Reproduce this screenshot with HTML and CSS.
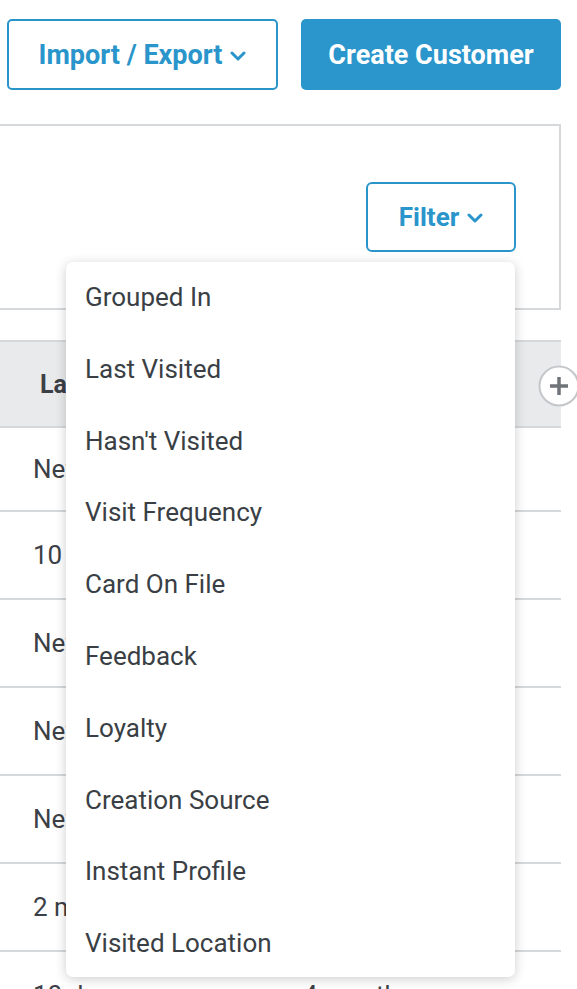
FILE: index.html
```html
<!DOCTYPE html>
<html lang="en">
<head>
<meta charset="utf-8">
<title>Customers</title>
<link rel="stylesheet" href="styles.css">
</head>
<body>
<div class="page">
  <div class="toolbar">
    <button class="btn btn-outline btn-import">Import / Export
      <svg class="chev" width="16" height="10" viewBox="0 0 16 10"><path d="M2 2 L8 8 L14 2" fill="none" stroke="currentColor" stroke-width="3" stroke-linecap="round" stroke-linejoin="round"/></svg>
    </button>
    <button class="btn btn-primary btn-create">Create Customer</button>
  </div>

  <div class="panel">
    <button class="btn btn-outline btn-filter">Filter
      <svg class="chev" width="16" height="10" viewBox="0 0 16 10"><path d="M2 2 L8 8 L14 2" fill="none" stroke="currentColor" stroke-width="3" stroke-linecap="round" stroke-linejoin="round"/></svg>
    </button>
    <ul class="menu">
      <li class="menu-item">Grouped In</li>
      <li class="menu-item">Last Visited</li>
      <li class="menu-item">Hasn't Visited</li>
      <li class="menu-item">Visit Frequency</li>
      <li class="menu-item">Card On File</li>
      <li class="menu-item">Feedback</li>
      <li class="menu-item">Loyalty</li>
      <li class="menu-item">Creation Source</li>
      <li class="menu-item">Instant Profile</li>
      <li class="menu-item">Visited Location</li>
    </ul>
  </div>

  <div class="table">
    <div class="thead">
      <span class="th">Last Visit</span>
      <span class="add-col">
        <svg width="42" height="42" viewBox="0 0 42 42"><circle cx="21" cy="21" r="19.5" fill="#fff" stroke="#c4c7ca" stroke-width="2"/><path d="M21 12 V30 M12 21 H30" stroke="#6f7479" stroke-width="3.5"/></svg>
      </span>
    </div>
    <div class="row row-first"><span class="c1">Never</span><span class="c2">Never</span></div>
    <div class="row"><span class="c1">10 days ago</span><span class="c2">3 months</span></div>
    <div class="row"><span class="c1">Never</span><span class="c2">Never</span></div>
    <div class="row"><span class="c1">Never</span><span class="c2">Never</span></div>
    <div class="row"><span class="c1">Never</span><span class="c2">Never</span></div>
    <div class="row"><span class="c1">2 months ago</span><span class="c2">5 months</span></div>
    <div class="row"><span class="c1">10 days ago</span><span class="c2">4 months</span></div>
  </div>
</div>
</body>
</html>
```

FILE: styles.css
```css
* { box-sizing: border-box; }
html, body { margin: 0; padding: 0; background: #fff; }
body {
  font-family: Roboto, "Liberation Sans", sans-serif;
  color: #3b4046;
  overflow: hidden;
}
.page { width: 577px; position: relative; }

.toolbar {
  display: flex;
  gap: 23px;
  padding: 19px 0 0 7px;
}
.btn {
  font-family: Roboto, "Liberation Sans", sans-serif;
  font-weight: 700;
  font-size: 27px;
  display: flex;
  align-items: center;
  justify-content: center;
  gap: 8px;
  cursor: pointer;
  padding: 0;
  margin: 0;
}
.btn-outline {
  background: #fff;
  color: #2a95cb;
  border: 2px solid #2a95cb;
  border-radius: 5px;
}
.btn-primary {
  background: #2a96cc;
  color: #fff;
  border: none;
  border-radius: 5px;
}
.btn-import { width: 271px; height: 71px; }
.btn-create { width: 260px; height: 71px; }
.chev { margin-top: 2px; }

.panel {
  position: relative;
  margin-top: 34px;
  width: 561px;
  height: 186px;
  border: 2px solid #d6d9dc;
  border-left: none;
  display: flex;
  justify-content: flex-end;
  align-items: flex-start;
  padding: 56px 43px 0 0;
}
.btn-filter { width: 150px; height: 70px; border-radius: 6px; font-size: 26px; }

.menu {
  list-style: none;
  margin: 0;
  padding: 0;
  position: absolute;
  left: 66px;
  top: 136px;
  width: 449px;
  height: 715px;
  background: #fff;
  border-radius: 7px;
  box-shadow: 0 2px 12px rgba(0, 0, 0, 0.2);
  z-index: 5;
}
.menu-item {
  height: 71.8px;
  line-height: 71.8px;
  padding-left: 19px;
  font-size: 26px;
  color: #3a3f45;
}

.table { margin-top: 30px; width: 561px; }
.thead {
  position: relative;
  height: 88px;
  background: #e9eaec;
  border-top: 2px solid #d6d9dc;
  border-bottom: 2px solid #d6d9dc;
  display: flex;
  align-items: center;
  padding-left: 40px;
}
.th { font-weight: 700; font-size: 25px; color: #3b4046; }
.add-col {
  position: absolute;
  left: 538px;
  top: 23px;
  width: 42px;
  height: 42px;
  display: block;
}
.add-col svg { display: block; }

.row {
  height: 88px;
  border-bottom: 2px solid #d6d9dc;
  display: flex;
  align-items: center;
  font-size: 26px;
  color: #3b4046;
}
.row-first { height: 84px; }
.c1 { width: 303px; padding-left: 33px; white-space: nowrap; }
.c2 { white-space: nowrap; }
```
